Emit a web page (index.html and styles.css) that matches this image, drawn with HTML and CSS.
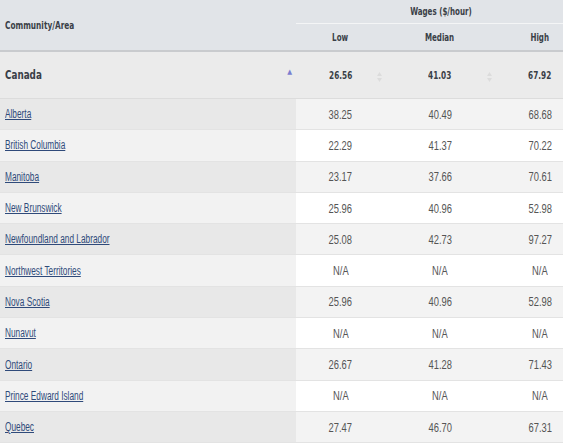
FILE: index.html
```html
<!DOCTYPE html>
<html>
<head>
<meta charset="utf-8">
<link rel="stylesheet" href="styles.css">
</head>
<body>
<div class="wrap">
<table class="wages">
  <colgroup>
    <col class="c-area"><col class="c-low"><col class="c-med"><col class="c-high">
  </colgroup>
  <thead>
    <tr class="h1">
      <th rowspan="2" class="h-area"><span class="lbl">Community/Area</span></th>
      <th colspan="3" class="h-wages"><span class="lbl">Wages ($/hour)</span></th>
    </tr>
    <tr class="h2">
      <th><span class="lbl">Low</span></th><th><span class="lbl">Median</span></th><th><span class="lbl">High</span></th>
    </tr>
  </thead>
  <tbody>
    <tr class="canada">
      <td class="area"><span class="cname">Canada</span><span class="sort-up">&#9650;</span></td>
      <td><span class="bnum">26.56</span><span class="sort-both"><svg width="5" height="10" viewBox="0 0 5 10"><path d="M2.5 0L5 4H0z M2.5 10L5 6H0z" fill="#dcdcdc"/></svg></span></td>
      <td><span class="bnum">41.03</span><span class="sort-both"><svg width="5" height="10" viewBox="0 0 5 10"><path d="M2.5 0L5 4H0z M2.5 10L5 6H0z" fill="#dcdcdc"/></svg></span></td>
      <td><span class="bnum">67.92</span></td>
    </tr>
    <tr class="odd"><td class="area"><a class="lnk" href="#">Alberta</a></td><td><span class="num">38.25</span></td><td><span class="num">40.49</span></td><td><span class="num">68.68</span></td></tr>
    <tr class="even"><td class="area"><a class="lnk" href="#">British Columbia</a></td><td><span class="num">22.29</span></td><td><span class="num">41.37</span></td><td><span class="num">70.22</span></td></tr>
    <tr class="odd"><td class="area"><a class="lnk" href="#">Manitoba</a></td><td><span class="num">23.17</span></td><td><span class="num">37.66</span></td><td><span class="num">70.61</span></td></tr>
    <tr class="even"><td class="area"><a class="lnk" href="#">New Brunswick</a></td><td><span class="num">25.96</span></td><td><span class="num">40.96</span></td><td><span class="num">52.98</span></td></tr>
    <tr class="odd"><td class="area"><a class="lnk" href="#">Newfoundland and Labrador</a></td><td><span class="num">25.08</span></td><td><span class="num">42.73</span></td><td><span class="num">97.27</span></td></tr>
    <tr class="even"><td class="area"><a class="lnk" href="#">Northwest Territories</a></td><td><span class="num">N/A</span></td><td><span class="num">N/A</span></td><td><span class="num">N/A</span></td></tr>
    <tr class="odd"><td class="area"><a class="lnk" href="#">Nova Scotia</a></td><td><span class="num">25.96</span></td><td><span class="num">40.96</span></td><td><span class="num">52.98</span></td></tr>
    <tr class="even"><td class="area"><a class="lnk" href="#">Nunavut</a></td><td><span class="num">N/A</span></td><td><span class="num">N/A</span></td><td><span class="num">N/A</span></td></tr>
    <tr class="odd"><td class="area"><a class="lnk" href="#">Ontario</a></td><td><span class="num">26.67</span></td><td><span class="num">41.28</span></td><td><span class="num">71.43</span></td></tr>
    <tr class="even"><td class="area"><a class="lnk" href="#">Prince Edward Island</a></td><td><span class="num">N/A</span></td><td><span class="num">N/A</span></td><td><span class="num">N/A</span></td></tr>
    <tr class="odd"><td class="area"><a class="lnk" href="#">Quebec</a></td><td><span class="num">27.47</span></td><td><span class="num">46.70</span></td><td><span class="num">67.31</span></td></tr>
  </tbody>
</table>
</div>
</body>
</html>
```
FILE: styles.css
```css
html, body {
  margin: 0;
  padding: 0;
  background: #ffffff;
}
.wrap {
  width: 563px;
  overflow: hidden;
}
.wages {
  border-collapse: collapse;
  table-layout: fixed;
  width: 585px;
  font-family: "Liberation Sans", Arial, sans-serif;
  font-size: 12px;
  color: #555555;
}
.c-area { width: 296px; }
.c-low { width: 89px; }
.c-med { width: 110px; }
.c-high { width: 90px; }

thead th {
  background: #e1e4e8;
  font-family: "DejaVu Sans Condensed", "DejaVu Sans", sans-serif;
  font-stretch: condensed;
  font-weight: bold;
  font-size: 10px;
  color: #3a3f47;
  padding: 0;
  text-align: center;
}
.lbl {
  display: inline-block;
  transform: scaleX(0.79);
}
.h-area .lbl {
  transform: scaleX(0.82);
  transform-origin: 0 50%;
}
.h1 th { height: 23px; }
.h2 th { height: 26px; border-bottom: 2px solid #c9cbce; }
.h-area {
  text-align: left;
  padding-left: 5px;
  border-bottom: 2px solid #c9cbce;
}
.h-wages {
  border-bottom: 1px solid #f4f5f6;
}

tbody td {
  padding: 0;
  text-align: center;
  position: relative;
}
tbody td.area {
  text-align: left;
  padding-left: 5px;
}
.canada td {
  height: 46px;
  background: #ebebeb;
  font-family: "DejaVu Sans Condensed", "DejaVu Sans", sans-serif;
  font-stretch: condensed;
  font-weight: bold;
  font-size: 11px;
  color: #3a3f47;
  border-bottom: 1px solid #dcdcdc;
}
.cname {
  display: inline-block;
  font-size: 11.5px;
  transform: scaleX(0.85);
  transform-origin: 0 50%;
}
.bnum {
  display: inline-block;
  transform: scaleX(0.74);
}
.sort-up {
  position: absolute;
  right: 4px;
  top: 16px;
  font-size: 7px;
  color: #7a7fd0;
}
.sort-both {
  position: absolute;
  right: 3px;
  top: 20px;
  line-height: 0;
}
.odd td, .even td {
  height: 30.3px;
  border-bottom: 1px solid #e3e3e3;
}
.odd td { background: #f3f3f3; }
.odd td.area { background: #e8e8e8; }
.even td { background: #ffffff; }
.even td.area { background: #f2f2f2; }
.num {
  display: inline-block;
  font-size: 13px;
  transform: scaleX(0.72);
}
.lnk {
  display: inline-block;
  color: #2f4a7a;
  text-decoration: underline;
  transform: scaleX(0.69);
  transform-origin: 0 50%;
}
```
